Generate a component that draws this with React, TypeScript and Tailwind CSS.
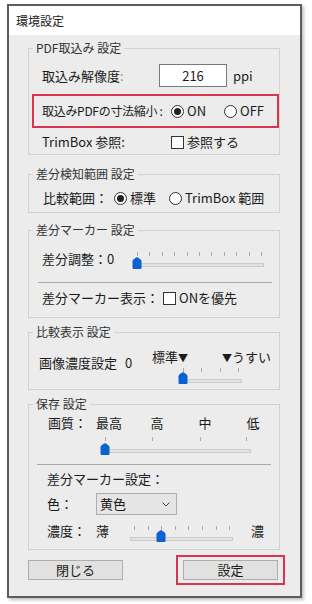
import React from "react";

type SliderProps = {
  w: number;
  h: number;
  ticks: number[];
  tickY: number;
  trackX: number;
  trackW: number;
  trackY: number;
  thumbX: number;
  thumbY: number;
};

// evenly spaced tick positions between first and last
const spread = (a: number, b: number, n: number) =>
  Array.from({ length: n }, (_, i) => Math.round(a + (i * (b - a)) / (n - 1)));

function Slider(p: SliderProps) {
  return (
    <div className="relative shrink-0" style={{ width: p.w, height: p.h }}>
      {p.ticks.map((x, i) => (
        <span
          key={i}
          className="absolute w-px h-[4px] bg-[#a9a9a9]"
          style={{ left: x, top: p.tickY }}
        />
      ))}
      <span
        className="absolute h-[4px] bg-[#e2e2e2] border border-[#cbcbcb]"
        style={{ left: p.trackX, top: p.trackY, width: p.trackW }}
      />
      <svg
        className="absolute"
        style={{ left: p.thumbX - 5, top: p.thumbY }}
        width="10"
        height="12"
        viewBox="0 0 10 12">
        <path
          d="M0.5 4.2 Q0.5 3.2 1.4 2.5 L4 0.6 Q5 0 6 0.6 L8.6 2.5 Q9.5 3.2 9.5 4.2 V11 Q9.5 12 8.5 12 H1.5 Q0.5 12 0.5 11 Z"
          fill="#0a62d0"
        />
      </svg>
    </div>
  );
}

function Radio({ checked }: { checked?: boolean }) {
  return (
    <span className="w-[13px] h-[13px] rounded-full border border-[#333] bg-white flex items-center justify-center shrink-0">
      {checked && <span className="w-[7px] h-[7px] rounded-full bg-[#222]" />}
    </span>
  );
}

function Check() {
  return <span className="w-[13px] h-[13px] border border-[#333] bg-white shrink-0" />;
}

function Group({
  title,
  className,
  children,
}: {
  title: string;
  className: string;
  children: React.ReactNode;
}) {
  return (
    <fieldset className={`border border-[#d2d2d2] w-[252px] ml-[19px] ${className}`}>
      <legend className="ml-[4px] px-[3px] text-[12px] leading-[14px] text-[#333]">
        {title}
      </legend>
      {children}
    </fieldset>
  );
}

export default function App() {
  return (
    <div className="min-h-[604px] bg-white pt-[4px] pl-[7px] text-[#1b1b1b] font-['Noto_Sans_CJK_JP','Noto_Sans',sans-serif]">
      <div className="w-[295px] h-[594px] border-2 border-[#5c5c5c] bg-[#ececec] shadow-[2px_2px_3px_rgba(0,0,0,0.25)] flex flex-col">
        {/* Title bar */}
        <div className="h-[29px] shrink-0 bg-white flex items-center pl-[7px] text-[12px]">
          環境設定
        </div>

        <div className="flex flex-col text-[13px] leading-[16px]">
          {/* PDF import */}
          <Group title="PDF取込み 設定" className="mt-[6px] pb-[4px]">
            <div className="flex items-center mt-[9px] h-[23px]">
              <span className="ml-[13px] w-[117px]">
                取込み解像度<span className="text-[#c98a3c]">:</span>
              </span>
              <div className="w-[68px] h-[23px] bg-white border border-[#7a7a7a] flex items-center justify-center">
                216
              </div>
              <span className="ml-[6px]">ppi</span>
            </div>

            <div className="mt-[7px] ml-[3px] w-[247px] h-[34px] border-2 border-[#d8364e] flex items-center pl-[8px]">
              <span className="w-[129px] shrink-0 whitespace-nowrap text-[12px] tracking-[-0.3px]">
                取込みPDFの寸法縮小 :
              </span>
              <span className="flex items-center gap-[3px] w-[53px]">
                <Radio checked />
                ON
              </span>
              <span className="flex items-center gap-[3px]">
                <Radio />
                OFF
              </span>
            </div>

            <div className="flex items-center mt-[6px] h-[16px]">
              <span className="ml-[13px] w-[129px]">TrimBox 参照:</span>
              <Check />
              <span className="ml-[3px]">参照する</span>
            </div>
          </Group>

          {/* Diff detection range */}
          <Group title="差分検知範囲 設定" className="mt-[12px] pb-[6px]">
            <div className="flex items-center mt-[9px] h-[16px]">
              <span className="ml-[14px] w-[71px]">比較範囲：</span>
              <span className="flex items-center gap-[3px] w-[55px]">
                <Radio checked />
                標準
              </span>
              <span className="flex items-center gap-[3px] whitespace-nowrap">
                <Radio />
                TrimBox 範囲
              </span>
            </div>
          </Group>

          {/* Diff marker */}
          <Group title="差分マーカー 設定" className="mt-[10px] pb-[11px]">
            <div className="flex items-start mt-[13px] h-[20px]">
              <span className="ml-[13px] w-[89px] mt-[1px]">差分調整：0</span>
              <Slider
                w={136}
                h={20}
                ticks={spread(6, 130, 11)}
                tickY={2}
                trackX={5}
                trackW={128}
                trackY={13}
                thumbX={6}
                thumbY={7}
              />
            </div>
            <div className="mt-[12px] ml-[9px] w-[234px] h-px bg-[#a9a9a9]" />
            <div className="flex items-center mt-[7px] h-[16px]">
              <span className="ml-[13px] w-[121px]">差分マーカー表示：</span>
              <Check />
              <span className="ml-[3px]">ONを優先</span>
            </div>
          </Group>

          {/* Compare display */}
          <Group title="比較表示 設定" className="mt-[7px] pb-[3px]">
            <div className="flex items-start mt-[10px]">
              <span className="ml-[10px] w-[86px] mt-[6px]">画像濃度設定</span>
              <span className="w-[27px] mt-[6px]">0</span>
              <div className="flex flex-col w-[120px]">
                <div className="flex justify-between h-[16px] w-[119px]">
                  <span>
                    標準<span className="text-[10px]">▼</span>
                  </span>
                  <span>
                    <span className="text-[10px]">▼</span>うすい
                  </span>
                </div>
                <div className="mt-[1px]">
                  <Slider
                    w={120}
                    h={20}
                    ticks={[31, 49, 68, 86]}
                    tickY={2}
                    trackX={31}
                    trackW={59}
                    trackY={13}
                    thumbX={31}
                    thumbY={6}
                  />
                </div>
              </div>
            </div>
          </Group>

          {/* Save */}
          <Group title="保存 設定" className="mt-[7px] pb-[4px]">
            <div className="flex items-center mt-[4px] h-[16px]">
              <span className="ml-[19px] w-[37px] whitespace-nowrap">画質：</span>
              <span className="w-[48px] text-center">最高</span>
              <span className="w-[48px] text-center">高</span>
              <span className="w-[48px] text-center">中</span>
              <span className="w-[48px] text-center">低</span>
            </div>
            <div className="ml-[66px] mt-[2px]">
              <Slider
                w={165}
                h={24}
                ticks={[10, 57, 105, 151]}
                tickY={4}
                trackX={10}
                trackW={146}
                trackY={16}
                thumbX={10}
                thumbY={10}
              />
            </div>
            <div className="mt-[7px] ml-[8px] w-[234px] h-px bg-[#a9a9a9]" />
            <div className="mt-[6px] ml-[18px]">差分マーカー設定：</div>
            <div className="flex items-center mt-[6px] h-[22px]">
              <span className="ml-[18px] w-[49px]">色：</span>
              <div className="w-[81px] h-[22px] bg-[#e5e5e5] border border-[#adadad] flex items-center justify-between pl-[3px] pr-[6px]">
                <span>黄色</span>
                <svg width="8" height="5" viewBox="0 0 8 5">
                  <polyline points="0.5,0.5 4,4 7.5,0.5" fill="none" stroke="#444" strokeWidth="1" />
                </svg>
              </div>
            </div>
            <div className="flex items-start mt-[8px] h-[22px]">
              <span className="ml-[18px] w-[49px]">濃度：</span>
              <span className="w-[30px]">薄</span>
              <Slider
                w={114}
                h={22}
                ticks={[8, 22, 35, 49, 62, 76, 90, 103]}
                tickY={3}
                trackX={4}
                trackW={103}
                trackY={14}
                thumbX={35}
                thumbY={7}
              />
              <span className="ml-[11px]">濃</span>
            </div>
          </Group>

          {/* Buttons */}
          <div className="flex items-start mt-[5px]">
            <button className="ml-[19px] mt-[5px] w-[95px] h-[20px] bg-[#e1e1e1] border border-[#adadad] text-[13px] leading-[16px]">
              閉じる
            </button>
            <div className="ml-[53px] border-2 border-[#d8364e] px-[5px] py-[3px]">
              <button className="w-[95px] h-[20px] bg-[#e1e1e1] border border-[#adadad] text-[13px] leading-[16px]">
                設定
              </button>
            </div>
          </div>
        </div>
      </div>
    </div>
  );
}
